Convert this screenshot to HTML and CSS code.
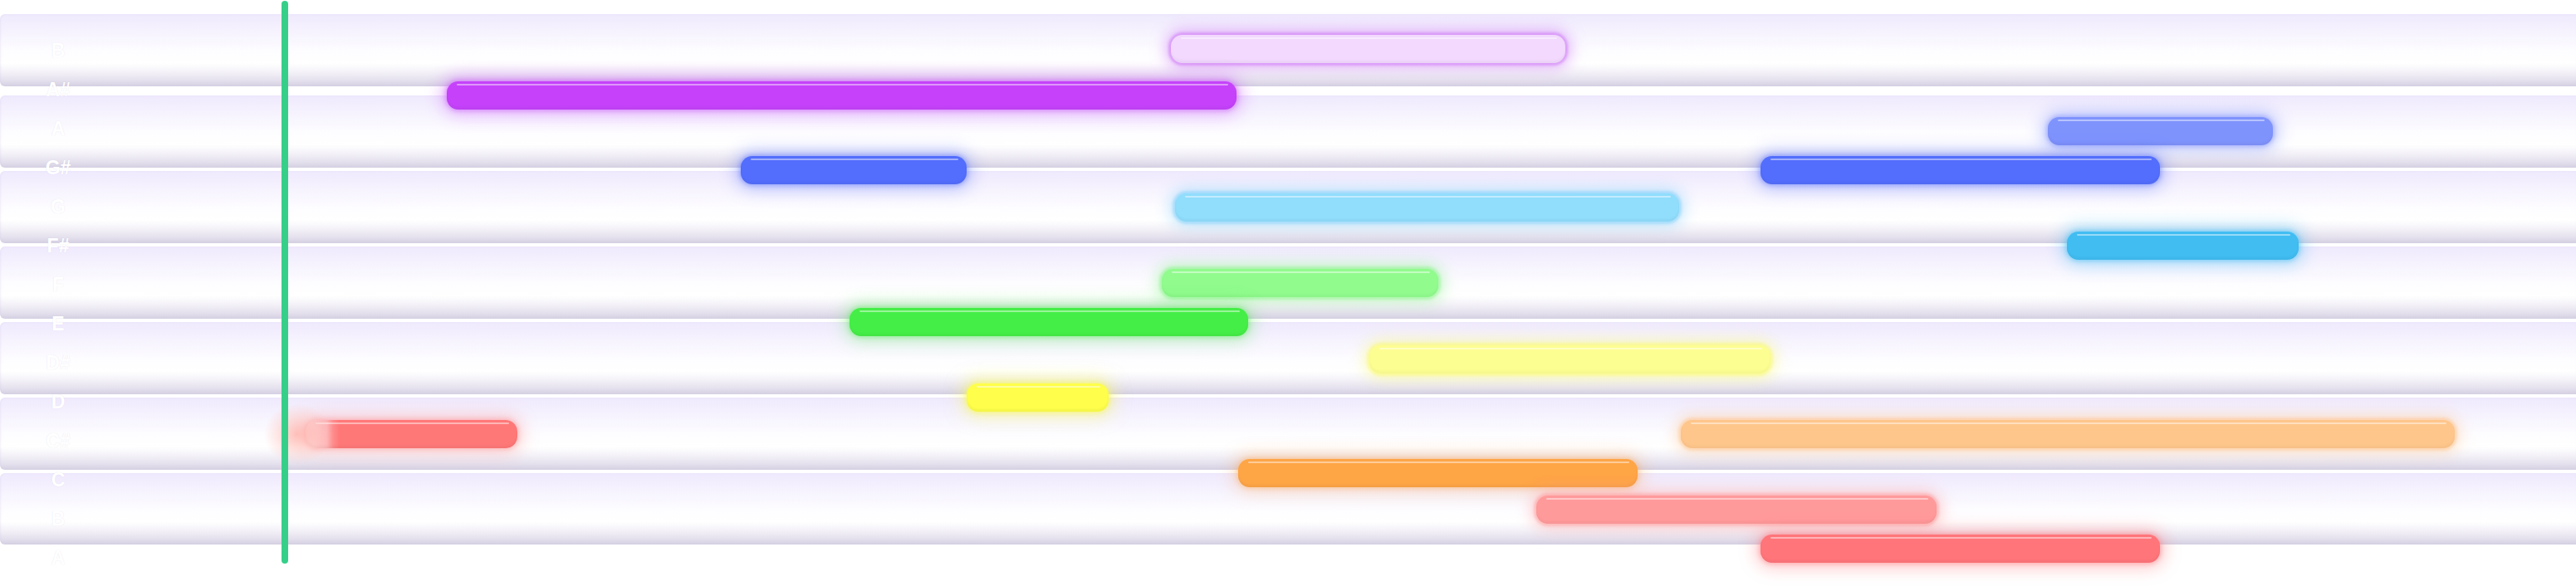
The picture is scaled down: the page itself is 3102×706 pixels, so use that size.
FILE: index.html
```html
<!DOCTYPE html>
<html lang="en">

<head>
    <meta charset="UTF-8" />
    <meta name="viewport" content="width=device-width, initial-scale=1.0" />
    <title>Piano Roll</title>
    <link rel="stylesheet" href="styles.css">
</head>

<body>

    <div class="roll">
        <div class="lanes">
            <div class="lane first"></div>
            <div class="lane"></div>
            <div class="lane"></div>
            <div class="lane"></div>
            <div class="lane"></div>
            <div class="lane"></div>
            <div class="lane last"></div>
        </div>

        <div class="keys">
            <span>B</span>
            <span>A#</span>
            <span>A</span>
            <span>G#</span>
            <span>G</span>
            <span>F#</span>
            <span>F</span>
            <span>E</span>
            <span>D#</span>
            <span>D</span>
            <span>C#</span>
            <span>C</span>
            <span>B</span>
            <span>A</span>
        </div>

        <div class="notes">
            <div class="note soft" style="--x:1410px;--y:42px;--w:475px;--c:#f2d9fd;--g:rgba(205,120,245,.55)"></div>
            <div class="note" style="--x:538px;--y:98px;--w:951px;--c:#c542fa;--g:rgba(205,90,250,.45)"></div>
            <div class="note" style="--x:2466px;--y:141px;--w:271px;--c:#7f93fd;--g:rgba(120,140,253,.45)"></div>
            <div class="note" style="--x:892px;--y:188px;--w:272px;--c:#536efd;--g:rgba(90,115,253,.4)"></div>
            <div class="note" style="--x:2120px;--y:188px;--w:481px;--c:#536efd;--g:rgba(90,115,253,.4)"></div>
            <div class="note soft" style="--x:1415px;--y:233px;--w:607px;--c:#90ddfc;--g:rgba(120,205,250,.45)"></div>
            <div class="note" style="--x:2489px;--y:279px;--w:279px;--c:#41bdf2;--g:rgba(70,190,245,.45)"></div>
            <div class="note soft" style="--x:1399px;--y:324px;--w:333px;--c:#91fb8e;--g:rgba(130,245,130,.45)"></div>
            <div class="note" style="--x:1023px;--y:371px;--w:480px;--c:#45ee47;--g:rgba(80,235,80,.35)"></div>
            <div class="note soft" style="--x:1649px;--y:416px;--w:483px;--c:#fdfe91;--g:rgba(250,250,120,.55)"></div>
            <div class="note" style="--x:1164px;--y:462px;--w:171px;--c:#fefe4b;--g:rgba(250,250,90,.5)"></div>
            <div class="note hit" style="--x:368px;--y:506px;--w:255px;--c:#ff7878;--g:rgba(255,130,130,.35)"></div>
            <div class="note soft" style="--x:2024px;--y:506px;--w:932px;--c:#fec68b;--g:rgba(254,195,140,.45)"></div>
            <div class="note" style="--x:1491px;--y:553px;--w:481px;--c:#fea546;--g:rgba(254,170,90,.35)"></div>
            <div class="note soft" style="--x:1850px;--y:597px;--w:482px;--c:#ff9a9b;--g:rgba(255,150,150,.45)"></div>
            <div class="note" style="--x:2120px;--y:644px;--w:481px;--c:#ff757a;--g:rgba(255,120,125,.4)"></div>

            <div class="burst"></div>
            <div class="playhead"></div>
        </div>
    </div>

</body>

</html>
```

FILE: styles.css
```css
* {
    box-sizing: border-box;
}

body {
    margin: 0;
    padding: 0;
    background-color: #fff;
    font-family: 'Liberation Sans', Arial, sans-serif;
    overflow: hidden;
}

.roll {
    display: grid;
    width: 3102px;
    height: 706px;
}

.lanes,
.keys,
.notes {
    grid-area: 1 / 1;
}

.lanes {
    display: flex;
    flex-direction: column;
    gap: 4px;
    padding-top: 17px;
}

.lane {
    height: 87px;
    border-radius: 6px 0 0 6px;
    background: linear-gradient(to bottom,
            #efe9fd 0%,
            #f6f3fe 25%,
            #fdfcff 50%,
            #ffffff 68%,
            #f4f2f8 80%,
            #e4e0ed 92%,
            #d5d0e2 100%);
    box-shadow: inset 1px 0 2px rgba(210, 200, 235, 0.25);
}

.lane.first {
    margin-bottom: 7px;
}

.lane.last {
    height: 86px;
}

.keys {
    display: flex;
    flex-direction: column;
    width: 140px;
    padding-top: 38px;
    z-index: 1;
}

.keys span {
    height: 47px;
    line-height: 47px;
    text-align: center;
    font-size: 23px;
    font-weight: 700;
    color: #fff;
    text-shadow: 0 0 1px rgba(170, 160, 200, 0.3);
}

.notes {
    position: relative;
    z-index: 2;
}

.note {
    position: absolute;
    left: var(--x);
    top: var(--y);
    width: var(--w);
    height: 34px;
    border-radius: 14px;
    background-color: var(--c);
    box-shadow:
        0 0 5px 2px var(--g),
        0 0 20px 6px var(--g),
        inset 0 -3px 3px rgba(0, 0, 0, 0.04);
}

.note::before {
    content: "";
    position: absolute;
    top: 3px;
    left: 12px;
    right: 10px;
    height: 2px;
    border-radius: 1px;
    background-color: rgba(255, 255, 255, 0.45);
}

.note.soft {
    box-shadow:
        0 0 3px 3px var(--g),
        0 0 18px 6px var(--g),
        inset 0 -3px 3px rgba(0, 0, 0, 0.03);
}

.note.hit {
    background: linear-gradient(90deg,
            rgba(255, 150, 150, 0.35) 0%,
            rgba(255, 135, 135, 0.6) 10%,
            rgba(255, 120, 120, 0.85) 13%,
            var(--c) 16%);
}

.burst {
    position: absolute;
    left: 318px;
    top: 486px;
    width: 80px;
    height: 74px;
    border-radius: 50%;
    background: radial-gradient(closest-side,
            rgba(255, 170, 160, 0.7),
            rgba(255, 190, 180, 0.35) 60%,
            rgba(255, 220, 210, 0) 100%);
}

.playhead {
    position: absolute;
    left: 339px;
    top: 1px;
    width: 8px;
    height: 678px;
    border-radius: 4px;
    background-color: #36cf8a;
}
```
